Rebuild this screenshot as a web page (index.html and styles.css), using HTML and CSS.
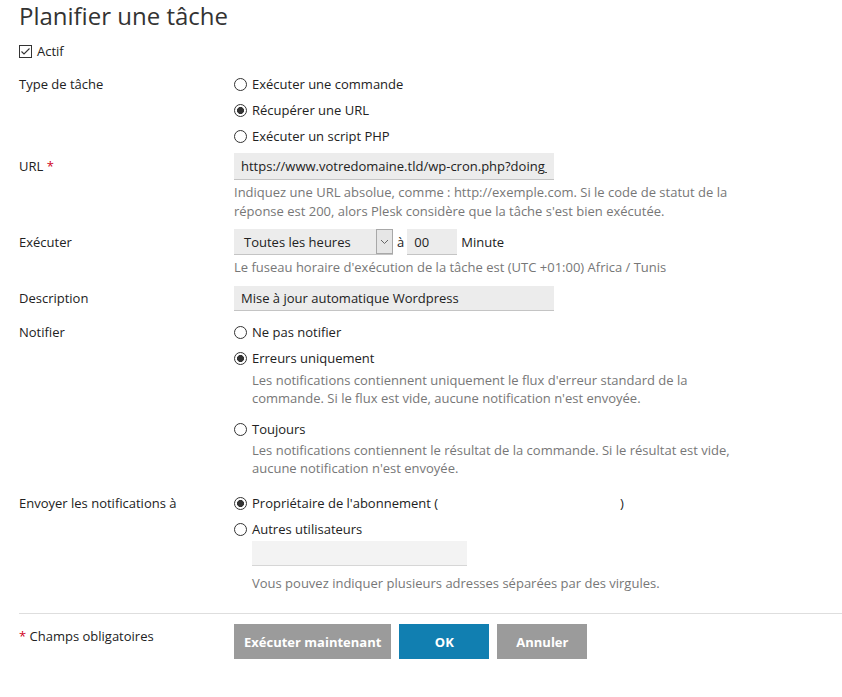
FILE: index.html
```html
<!DOCTYPE html>
<html lang="fr">
<head>
  <meta charset="UTF-8">
  <title>Planifier une tâche</title>
  <link rel="stylesheet" href="styles.css">
</head>
<body>
  <div class="page">
    <h1>Planifier une tâche</h1>
    <label class="check">
      <svg class="box" width="13" height="13" viewBox="0 0 13 13"><rect x="0.5" y="0.5" width="12" height="12" fill="#fff" stroke="#333"/><polyline points="2.5,6.5 5,9 10.5,3.5" fill="none" stroke="#333" stroke-width="1.1"/></svg>
      Actif
    </label>

    <div class="form">
      <div class="row row-type">
        <div class="label">Type de tâche</div>
        <div class="field">
          <label class="radio"><input type="radio" name="type"> Exécuter une commande</label>
          <label class="radio"><input type="radio" name="type" checked> Récupérer une URL</label>
          <label class="radio"><input type="radio" name="type"> Exécuter un script PHP</label>
        </div>
      </div>

      <div class="row row-url">
        <div class="label label-input">URL <span class="req">*</span></div>
        <div class="field">
          <input class="text text-url" type="text" value="https://www.votredomaine.tld/wp-cron.php?doing_wp_cron">
          <p class="hint">Indiquez une URL absolue, comme : http://exemple.com. Si le code de statut de la réponse est 200, alors Plesk considère que la tâche s'est bien exécutée.</p>
        </div>
      </div>

      <div class="row row-run">
        <div class="label label-select">Exécuter</div>
        <div class="field">
          <div class="inline">
            <div class="select">
              <span class="select-value">Toutes les heures</span>
              <span class="select-arrow">
                <svg width="9" height="6" viewBox="0 0 9 6"><polyline points="1,1 4.5,4.5 8,1" fill="none" stroke="#666" stroke-width="1"/></svg>
              </span>
            </div>
            <span class="at">à</span>
            <input class="text text-minute" type="text" value="00">
            <span class="unit">Minute</span>
          </div>
          <p class="hint">Le fuseau horaire d'exécution de la tâche est (UTC +01:00) Africa / Tunis</p>
        </div>
      </div>

      <div class="row row-desc">
        <div class="label label-desc">Description</div>
        <div class="field">
          <input class="text text-desc" type="text" value="Mise à jour automatique Wordpress">
        </div>
      </div>

      <div class="row row-notify">
        <div class="label">Notifier</div>
        <div class="field">
          <label class="radio"><input type="radio" name="notify"> Ne pas notifier</label>
          <label class="radio"><input type="radio" name="notify" checked> Erreurs uniquement</label>
          <p class="hint hint-sub">Les notifications contiennent uniquement le flux d'erreur standard de la commande. Si le flux est vide, aucune notification n'est envoyée.</p>
          <label class="radio radio-always"><input type="radio" name="notify"> Toujours</label>
          <p class="hint hint-sub hint-always">Les notifications contiennent le résultat de la commande. Si le résultat est vide, aucune notification n'est envoyée.</p>
        </div>
      </div>

      <div class="row row-send">
        <div class="label">Envoyer les notifications à</div>
        <div class="field">
          <label class="radio"><input type="radio" name="send" checked> Propriétaire de l'abonnement (<span class="masked"></span>)</label>
          <label class="radio"><input type="radio" name="send"> Autres utilisateurs</label>
          <input class="text text-others" type="text">
          <p class="hint hint-sub hint-others">Vous pouvez indiquer plusieurs adresses séparées par des virgules.</p>
        </div>
      </div>
    </div>

    <div class="footer">
      <div class="label label-footer"><span class="req">*</span> Champs obligatoires</div>
      <div class="buttons">
        <button class="btn">Exécuter maintenant</button>
        <button class="btn btn-primary">OK</button>
        <button class="btn">Annuler</button>
      </div>
    </div>
  </div>
</body>
</html>
```

FILE: styles.css
```css
:root {
  --text: #222222;
  --hint: #777777;
  --input-bg: #ececec;
  --input-line: #c4c4c4;
  --btn-grey: #9b9b9b;
  --btn-blue: #117fb1;
  --red: #d0021b;
}
* {
  box-sizing: border-box;
}
body {
  margin: 0;
  font-family: "Open Sans", "Liberation Sans", sans-serif;
  font-size: 13px;
  color: var(--text);
  background: #fff;
}
.page {
  padding-left: 19px;
}
h1 {
  margin: 0;
  font-size: 24px;
  font-weight: 400;
  line-height: 32px;
  color: #333;
}
.check {
  display: flex;
  align-items: center;
  gap: 5px;
  margin-top: 10px;
  line-height: 18px;
}
.form {
  margin-top: 15px;
}
.row, .footer {
  display: grid;
  grid-template-columns: 215px 505px;
}
.label {
  line-height: 18px;
}
.label-input {
  line-height: 27px;
}
.label-select {
  line-height: 26px;
}
.label-desc {
  line-height: 25px;
}
.req {
  color: var(--red);
}
.radio {
  display: flex;
  align-items: center;
  height: 18px;
  line-height: 18px;
  white-space: nowrap;
}
.radio + .radio {
  margin-top: 8px;
}
.radio input {
  appearance: none;
  -webkit-appearance: none;
  width: 13px;
  height: 13px;
  margin: 0 5px 0 0;
  border: 1px solid #333;
  border-radius: 50%;
  background: #fff;
}
.radio input:checked {
  background: radial-gradient(circle, #333 0 3.2px, #fff 3.8px);
}
.text {
  display: block;
  height: 25px;
  padding: 0 7px;
  border: none;
  border-bottom: 1px solid var(--input-line);
  background: var(--input-bg);
  font-family: inherit;
  font-size: 13px;
  color: var(--text);
  outline: none;
}
.text-url {
  width: 320px;
  height: 27px;
}
.text-desc {
  width: 320px;
}
.hint {
  margin: 3px 0 0;
  line-height: 19px;
  color: var(--hint);
}
.hint-sub {
  margin: 4px 0 0 18px;
  line-height: 18px;
}
.hint-always {
  margin-top: 3px;
}
.radio-always {
  margin-top: 13px;
}
.row-url {
  margin-top: 8px;
}
.row-run {
  margin-top: 8px;
}
.row-desc {
  margin-top: 9px;
}
.row-notify {
  margin-top: 12px;
}
.row-send {
  margin-top: 17px;
}
.inline {
  display: flex;
  align-items: center;
  height: 26px;
}
.select {
  display: flex;
  width: 159px;
  height: 26px;
  background: var(--input-bg);
  border-bottom: 1px solid var(--input-line);
}
.select-value {
  flex: 1;
  padding-left: 10px;
  line-height: 26px;
}
.select-arrow {
  display: flex;
  align-items: center;
  justify-content: center;
  width: 17px;
  border: 1px solid #a8a8a8;
  background: #e6e6e6;
}
.at {
  margin: 0 3px 0 4px;
}
.text-minute {
  width: 50px;
  height: 26px;
}
.unit {
  margin-left: 4px;
}
.masked {
  display: inline-block;
  width: 182px;
}
.text-others {
  width: 215px;
  margin: 3px 0 0 18px;
  background: #f3f3f3;
  border-bottom-color: #d6d6d6;
}
.hint-others {
  margin-top: 8px;
}
.footer {
  margin-top: 21px;
  padding-top: 10px;
  border-top: 1px solid #dedede;
  height: 70px;
}
.label-footer {
  padding-top: 3px;
}
.buttons {
  display: flex;
  gap: 8px;
}
.btn {
  height: 35px;
  min-width: 90px;
  padding: 0 10px;
  border: none;
  background: var(--btn-grey);
  color: #fff;
  font-family: inherit;
  font-size: 13px;
  font-weight: 700;
  cursor: pointer;
}
.btn-primary {
  background: var(--btn-blue);
}
```
